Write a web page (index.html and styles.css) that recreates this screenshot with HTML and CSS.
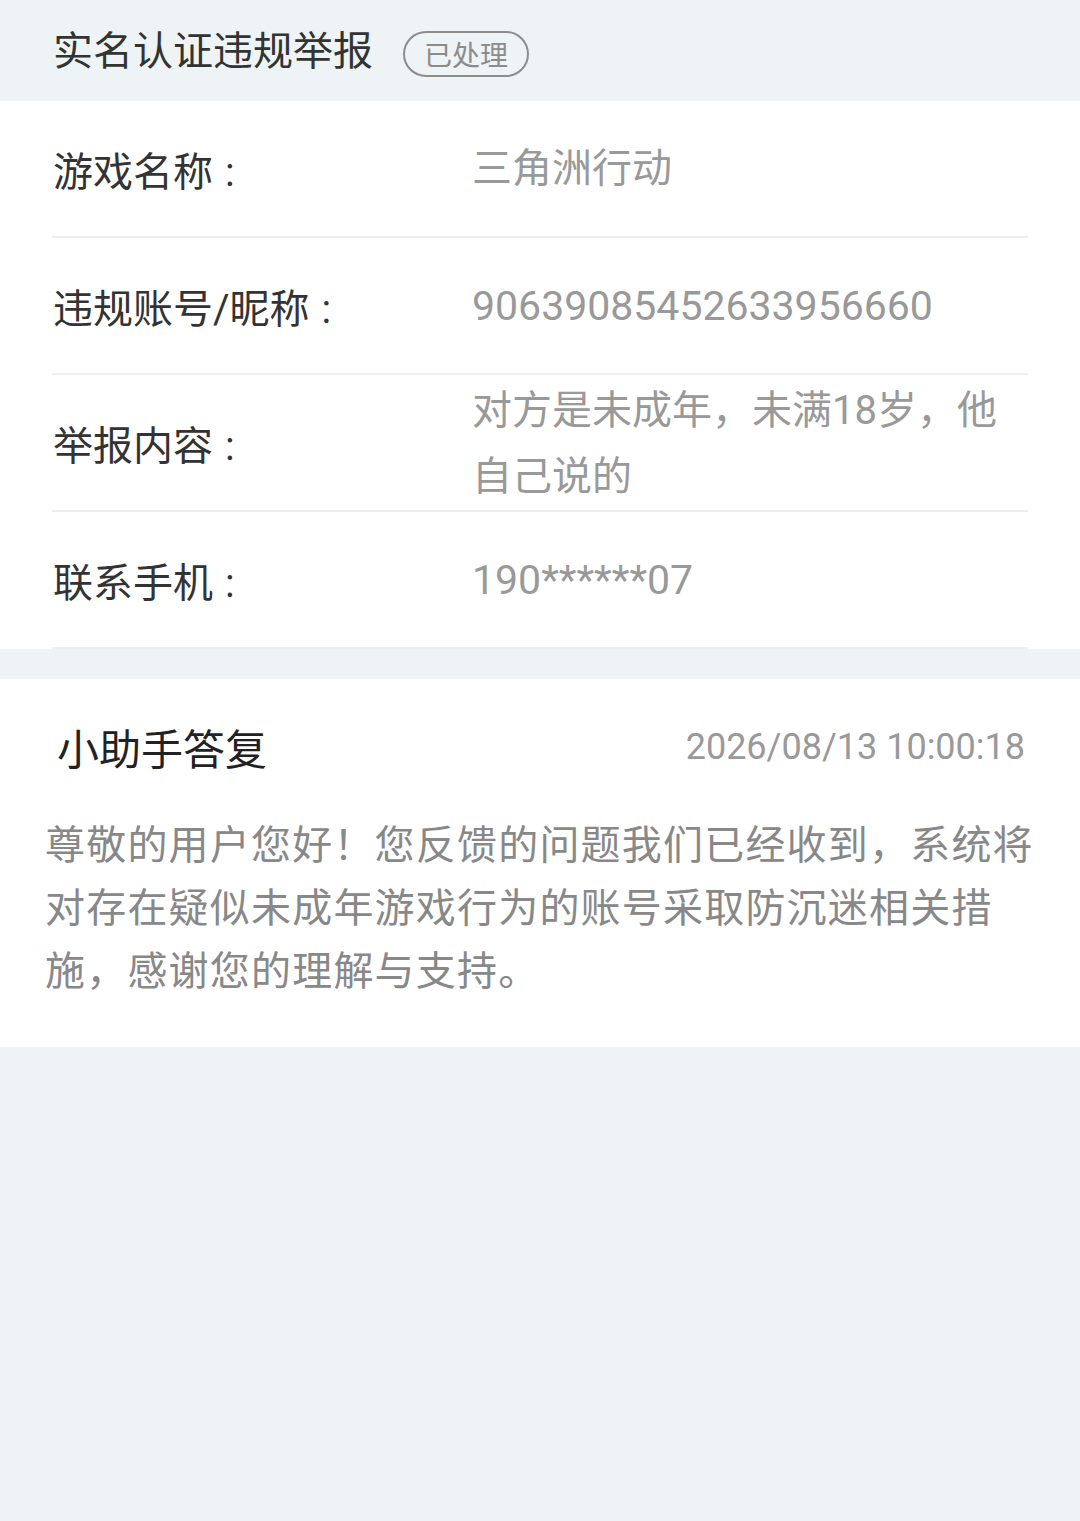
FILE: index.html
```html
<!DOCTYPE html>
<html lang="zh-CN">
<head>
<meta charset="utf-8">
<link rel="stylesheet" href="styles.css">
</head>
<body>
<div class="page">
  <header class="head">
    <h1 class="title">实名认证违规举报</h1>
    <span class="badge">已处理</span>
  </header>
  <section class="card info">
    <div class="row">
      <div class="label">游戏名称<span class="colon">:</span></div>
      <div class="value">三角洲行动</div>
    </div>
    <div class="row">
      <div class="label">违规账号/昵称<span class="colon">:</span></div>
      <div class="value num">90639085452633956660</div>
    </div>
    <div class="row multi">
      <div class="label">举报内容<span class="colon">:</span></div>
      <div class="value">对方是未成年，未满18岁，他自己说的</div>
    </div>
    <div class="row">
      <div class="label">联系手机<span class="colon">:</span></div>
      <div class="value num">190******07</div>
    </div>
  </section>
  <section class="card reply">
    <div class="reply-head">
      <div class="reply-title">小助手答复</div>
      <div class="reply-time">2026/08/13 10:00:18</div>
    </div>
    <p class="reply-body">尊敬的用户您好！您反馈的问题我们已经收到，系统将对存在疑似未成年游戏行为的账号采取防沉迷相关措施，感谢您的理解与支持。</p>
  </section>
</div>
</body>
</html>
```
FILE: styles.css
```css
html, body {
  margin: 0;
  padding: 0;
  background: #eef3f6;
}
body {
  font-family: Roboto, "Noto Sans CJK SC", sans-serif;
  width: 1080px;
  height: 1521px;
  overflow: hidden;
}
.page {
  display: flex;
  flex-direction: column;
}
.head {
  height: 101px;
  display: flex;
  align-items: center;
  padding-left: 53px;
  box-sizing: border-box;
}
.title {
  margin: 0;
  font-size: 40px;
  font-weight: 400;
  color: #333;
  line-height: 1;
  position: relative;
  top: 1px;
}
.badge {
  margin-left: 30px;
  height: 46px;
  box-sizing: border-box;
  border: 2px solid #8c8c8c;
  border-radius: 23px;
  padding: 0 19px;
  display: flex;
  align-items: center;
  font-size: 28px;
  color: #8c8c8c;
  position: relative;
  top: 3px;
}
.card {
  background: #fff;
}
.info {
  padding: 0 52px;
}
.row {
  display: flex;
  align-items: center;
  height: 137px;
  border-bottom: 2px solid #eeeeee;
  box-sizing: border-box;
}
.label {
  width: 419px;
  flex: none;
  font-size: 40px;
  color: #333;
  padding-left: 1px;
}
.colon {
  margin-left: 12px;
}
.value {
  flex: 1;
  font-size: 40px;
  color: #999;
  line-height: 66px;
}
.value.num {
  font-size: 41px;
}
.multi .value {
  position: relative;
  top: 1px;
  padding-right: 20px;
}
.reply {
  margin-top: 30px;
  height: 368px;
  box-sizing: border-box;
  padding: 0 40px 0 45px;
}
.reply-head {
  display: flex;
  align-items: center;
  justify-content: space-between;
  height: 135px;
  padding-left: 12px;
  padding-right: 15px;
}
.reply-title {
  font-size: 42px;
  color: #222;
}
.reply-time {
  font-size: 36px;
  color: #999;
}
.reply-body {
  margin: 0;
  font-size: 40px;
  line-height: 63px;
  letter-spacing: 1.2px;
  color: #888;
}
```
